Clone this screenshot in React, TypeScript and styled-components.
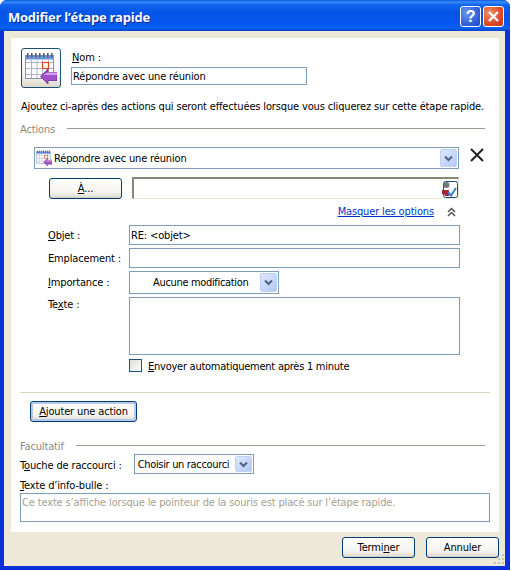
import React from "react";
import styled, { createGlobalStyle } from "styled-components";

const GlobalStyle = createGlobalStyle`
  html, body {
    margin: 0;
    padding: 0;
    background: #fff;
  }
  body {
    font-family: "DejaVu Sans", "Liberation Sans", sans-serif;
    font-stretch: condensed;
    font-size: 11px;
    line-height: 13px;
    letter-spacing: -0.15px;
    color: #000;
  }
`;

function CalendarIcon({ size }: { size: number }) {
  return (
    <svg width={size} height={size} viewBox="0 0 32 32">
      <rect x="0.500" y="3.500" width="28" height="23" fill="#fff" stroke="#8a94a8" />
      <rect x="0.500" y="3.500" width="28" height="4" fill="#6f93d8" />
      {[2, 6, 10, 14, 18, 22, 26].map((x) => (
        <rect key={x} x={x} y="1" width="1.6" height="4.500" fill="#56607a" />
      ))}
      <path
        d="M1 10.500h27M1 16.500h27M1 22.500h27M6.500 8v18M12 8v18M17.500 8v18M23.500 8v18"
        stroke="#a9b4cc"
        strokeWidth="1"
        fill="none"
      />
      <rect x="17.500" y="10.500" width="6" height="6" fill="#fff" stroke="#e0451f" strokeWidth="1.200" />
      <path d="M15.500 24.500 23 17v3.500h9v8h-9V32z" fill="#a050c8" stroke="#6b2a94" strokeWidth="0.800" />
      <path d="M23 20.500h9v2.500H18.500z" fill="#d6a0ea" />
    </svg>
  );
}

function Chevron() {
  return (
    <svg width="9" height="7" viewBox="0 0 9 7">
      <path d="M1 1.500 4.500 5 8 1.500" fill="none" stroke="#4d6185" strokeWidth="2" />
    </svg>
  );
}

function AddressIcon() {
  return (
    <svg width="16" height="19" viewBox="0 0 16 19">
      <rect x="1.500" y="1.500" width="14" height="16" rx="2" fill="#fff" stroke="#1c4f78" />
      <circle cx="4.500" cy="5" r="3" fill="#777" />
      <path d="M0 10h7v6H3l-1-2H0z" fill="#a5262f" />
      <path d="M6 12l3 3.500L14 8" fill="none" stroke="#3b7fd6" strokeWidth="2" />
    </svg>
  );
}

const Window = styled.div`
  width: 510px;
  height: 570px;
  box-sizing: border-box;
  display: flex;
  flex-direction: column;
  background: #0831d9;
  border-radius: 7px 7px 0 0;
  overflow: hidden;
`;

const TitleBar = styled.div`
  height: 31px;
  flex: none;
  box-sizing: border-box;
  padding: 2px 6px 0 8px;
  display: flex;
  align-items: center;
  justify-content: space-between;
  background: linear-gradient(
    to bottom,
    #0a5ae0 0,
    #3b8cf8 2px,
    #0f63ec 5px,
    #0353e6 14px,
    #0558ee 24px,
    #0a62f4 28px,
    #0343c8 31px
  );
`;

const Title = styled.span`
  margin-top: 1px;
  font-family: "Open Sans", sans-serif;
  font-stretch: normal;
  letter-spacing: -0.25px;
  font-weight: 700;
  font-size: 13px;
  color: #fff;
  text-shadow: 1px 1px 0 #0a2a90;
`;

const CaptionButtons = styled.div`
  display: flex;
  gap: 2px;
`;

const CaptionButton = styled.div<{ $danger?: boolean }>`
  width: 21px;
  height: 21px;
  box-sizing: border-box;
  border: 1px solid #fff;
  border-radius: 3px;
  display: flex;
  align-items: center;
  justify-content: center;
  color: #fff;
  font-family: "Liberation Sans", sans-serif;
  font-weight: 700;
  font-size: 16px;
  background: ${(p) =>
    p.$danger
      ? "radial-gradient(circle at 30% 30%, #f0906a, #dd4a22 60%, #c23a12)"
      : "radial-gradient(circle at 30% 30%, #6d95ee, #2f5fd8 65%, #2148c0)"};
`;

const Client = styled.div`
  flex: 1;
  margin: 0 5px 4px 4px;
  background: #ece9d8;
  padding: 7px 6px 0 7px;
  display: flex;
  flex-direction: column;
  position: relative;
`;

const Panel = styled.div`
  height: 494px;
  flex: none;
  box-sizing: border-box;
  background: #fff;
  padding: 10px 9px 0;
  display: flex;
  flex-direction: column;
`;

const Header = styled.div`
  display: flex;
  align-items: flex-start;
  margin-left: 1px;
`;

const IconButton = styled.div`
  width: 40px;
  height: 40px;
  box-sizing: border-box;
  border: 1px solid #1c4f78;
  border-radius: 3px;
  background: linear-gradient(to bottom, #ffffff, #f4f2ea 70%, #dcd8c8);
  display: flex;
  align-items: center;
  justify-content: center;
`;

const NameColumn = styled.div`
  margin-left: 10px;
  display: flex;
  flex-direction: column;
`;

const NameLabel = styled.label`
  margin: 3px 0 3px 1px;
`;

const Field = styled.div<{ $w?: number; $h?: number; $muted?: boolean }>`
  width: ${(p) => (p.$w ? `${p.$w}px` : "auto")};
  height: ${(p) => p.$h ?? 20}px;
  box-sizing: border-box;
  border: 1px solid #7f9db9;
  background: #fff;
  padding: 2px 1px;
  color: ${(p) => (p.$muted ? "#a5a193" : "#000")};
  white-space: nowrap;
  overflow: hidden;
`;

const FormField = styled(Field)`
  padding-top: 3px;
`;

const Intro = styled.p`
  margin: 12px 0 0 1px;
  white-space: nowrap;
`;

const SectionHead = styled.div<{ $top: number }>`
  margin-top: ${(p) => p.$top}px;
  margin-right: 5px;
  display: flex;
  align-items: center;
  gap: 12px;
  color: #8c8a7e;
  &::after {
    content: "";
    flex: 1;
    height: 1px;
    background: #9d9d96;
    margin-top: -2px;
  }
`;

const ActionBox = styled.div`
  margin-top: 11px;
  margin-left: 14px;
  display: flex;
  flex-direction: column;
`;

const ActionRow = styled.div`
  display: flex;
  align-items: flex-start;
`;

const Combo = styled.div<{ $w: number; $h: number }>`
  width: ${(p) => p.$w}px;
  height: ${(p) => p.$h}px;
  box-sizing: border-box;
  border: 1px solid #7f9db9;
  background: #fff;
  display: flex;
  align-items: center;
  padding: 1px;
  flex: none;
`;

const ComboText = styled.span<{ $indent: number; $tight?: boolean }>`
  flex: 1;
  display: flex;
  align-items: center;
  gap: 2px;
  padding-left: ${(p) => p.$indent}px;
  white-space: nowrap;
  letter-spacing: ${(p) => (p.$tight ? "-0.33px" : "inherit")};
`;

const ComboArrow = styled.span`
  width: 17px;
  align-self: stretch;
  flex: none;
  border-radius: 2px;
  background: linear-gradient(135deg, #dfe8fc, #b4c8f6);
  border: 1px solid #bcd0f8;
  box-sizing: border-box;
  display: flex;
  align-items: center;
  justify-content: center;
`;

const RemoveIcon = styled.svg`
  margin: 1px 0 0 11px;
`;

const Recipients = styled.div`
  margin: 9px 0 0 15px;
  display: flex;
  align-items: flex-start;
  gap: 10px;
`;

const XpButton = styled.button<{ $w: number; $focus?: boolean }>`
  width: ${(p) => p.$w}px;
  height: 21px;
  flex: none;
  box-sizing: border-box;
  padding: 0;
  border: 1px solid #003c74;
  border-radius: 3px;
  font: inherit;
  font-stretch: condensed;
  letter-spacing: inherit;
  color: #000;
  background: linear-gradient(to bottom, #ffffff, #f4f3ee 70%, #dcd8cc);
  box-shadow: ${(p) =>
    p.$focus ? "inset 0 0 0 2px #b4c9ee" : "inset 0 -1px 0 #d6d0c5"};
`;

const ToField = styled.div`
  width: 327px;
  height: 22px;
  margin-top: -1px;
  box-sizing: border-box;
  border-top: 2px solid #8a867a;
  border-left: 2px solid #8a867a;
  border-right: 1px solid #ece9d8;
  border-bottom: 1px solid #ece9d8;
  display: flex;
  justify-content: flex-end;
  align-items: flex-start;
  padding-top: 1px;
`;

const OptionsRow = styled.div`
  margin-top: 6px;
  margin-right: 34px;
  height: 13px;
  display: flex;
  justify-content: flex-end;
  align-items: center;
  gap: 13px;
`;

const HideLink = styled.a`
  color: #0033cc;
  text-decoration: underline;
`;

const FormGrid = styled.div`
  margin: 7px 0 0 28px;
  display: grid;
  grid-template-columns: 81px 331px;
  row-gap: 3px;
`;

const FormLabel = styled.label<{ $top?: number }>`
  padding-top: ${(p) => p.$top ?? 4}px;
  white-space: nowrap;
`;

const CheckRow = styled.label`
  margin: 3px 0 0 109px;
  display: flex;
  align-items: center;
  gap: 6px;
  letter-spacing: -0.25px;
`;

const CheckText = styled.span`
  padding-top: 2px;
`;

const CheckBox = styled.span`
  width: 13px;
  height: 13px;
  box-sizing: border-box;
  border: 1px solid #1c5180;
  background: linear-gradient(135deg, #dcdcd7, #ffffff);
`;

const Divider = styled.hr`
  margin: 19px 0 0;
  border: 0;
  height: 1px;
  background: #d6d3bf;
`;

const AddRow = styled.div`
  margin: 8px 0 0 10px;
`;

const ShortcutRow = styled.div`
  margin-top: 1px;
  display: flex;
  align-items: center;
  gap: 12px;
`;

const ShortcutLabel = styled.label`
  padding-top: 2px;
`;

const TipLabel = styled.label`
  margin: 5px 0 1px;
`;

const Footer = styled.div`
  flex: 1;
  display: flex;
  justify-content: flex-end;
  align-items: flex-start;
  gap: 11px;
  padding-top: 5px;
`;

const Grip = styled.svg`
  position: absolute;
  right: 0;
  bottom: 0;
`;

export default function App() {
  return (
    <>
      <GlobalStyle />
      <Window>
        <TitleBar>
          <Title>Modifier l’étape rapide</Title>
          <CaptionButtons>
            <CaptionButton>?</CaptionButton>
            <CaptionButton $danger>
              <svg width="13" height="13" viewBox="0 0 13 13">
                <path d="M2 2l9 9M11 2l-9 9" stroke="#fff" strokeWidth="2.400" />
              </svg>
            </CaptionButton>
          </CaptionButtons>
        </TitleBar>
        <Client>
          <Panel>
            <Header>
              <IconButton>
                <CalendarIcon size={32} />
              </IconButton>
              <NameColumn>
                <NameLabel>
                  <u>N</u>om :
                </NameLabel>
                <Field $w={236} $h={18}>
                  Répondre avec une réunion
                </Field>
              </NameColumn>
            </Header>
            <Intro>
              Ajoutez ci-après des actions qui seront effectuées lorsque vous cliquerez sur cette
              étape rapide.
            </Intro>
            <SectionHead $top={10}>Actions</SectionHead>
            <ActionBox>
              <ActionRow>
                <Combo $w={425} $h={22}>
                  <ComboText $indent={0}>
                    <CalendarIcon size={16} />
                    Répondre avec une réunion
                  </ComboText>
                  <ComboArrow>
                    <Chevron />
                  </ComboArrow>
                </Combo>
                <RemoveIcon width="14" height="14" viewBox="0 0 14 14">
                  <path d="M1 1l12 12M13 1 1 13" stroke="#222" strokeWidth="2" />
                </RemoveIcon>
              </ActionRow>
              <Recipients>
                <XpButton $w={73}>
                  <u>À</u>...
                </XpButton>
                <ToField>
                  <AddressIcon />
                </ToField>
              </Recipients>
              <OptionsRow>
                <HideLink>Masquer les options</HideLink>
                <svg width="9" height="10" viewBox="0 0 9 10">
                  <path d="M1 5 4.500 1.500 8 5M1 9 4.500 5.500 8 9" fill="none" stroke="#555" strokeWidth="1.500" />
                </svg>
              </OptionsRow>
            </ActionBox>
            <FormGrid>
              <FormLabel>
                <u>O</u>bjet :
              </FormLabel>
              <FormField>RE: &lt;objet&gt;</FormField>
              <FormLabel>Emplacement :</FormLabel>
              <FormField />
              <FormLabel $top={5}>
                <u>I</u>mportance :
              </FormLabel>
              <Combo $w={150} $h={23}>
                <ComboText $indent={22} $tight>
                  Aucune modification
                </ComboText>
                <ComboArrow>
                  <Chevron />
                </ComboArrow>
              </Combo>
              <FormLabel $top={1}>
                Te<u>x</u>te :
              </FormLabel>
              <Field $h={58} />
            </FormGrid>
            <CheckRow>
              <CheckBox />
              <CheckText>
                <u>E</u>nvoyer automatiquement après 1 minute
              </CheckText>
            </CheckRow>
            <Divider />
            <AddRow>
              <XpButton $w={107} $focus>
                <u>A</u>jouter une action
              </XpButton>
            </AddRow>
            <SectionHead $top={18}>Facultatif</SectionHead>
            <ShortcutRow>
              <ShortcutLabel>
                T<u>o</u>uche de raccourci :
              </ShortcutLabel>
              <Combo $w={120} $h={20}>
                <ComboText $indent={2} $tight>
                  Choisir un raccourci
                </ComboText>
                <ComboArrow>
                  <Chevron />
                </ComboArrow>
              </Combo>
            </ShortcutRow>
            <TipLabel>
              <u>T</u>exte d’info-bulle :
            </TipLabel>
            <Field $h={29} $muted>
              Ce texte s’affiche lorsque le pointeur de la souris est placé sur l’étape rapide.
            </Field>
          </Panel>
          <Footer>
            <XpButton $w={73}>
              Termi<u>n</u>er
            </XpButton>
            <XpButton $w={73}>Annuler</XpButton>
          </Footer>
          <Grip width="12" height="12" viewBox="0 0 12 12">
            {[
              [9, 0],
              [5, 4],
              [9, 4],
              [1, 8],
              [5, 8],
              [9, 8],
            ].map(([x, y]) => (
              <rect key={`${x}-${y}`} x={x} y={y} width="2" height="2" fill="#c5c2b0" />
            ))}
          </Grip>
        </Client>
      </Window>
    </>
  );
}
